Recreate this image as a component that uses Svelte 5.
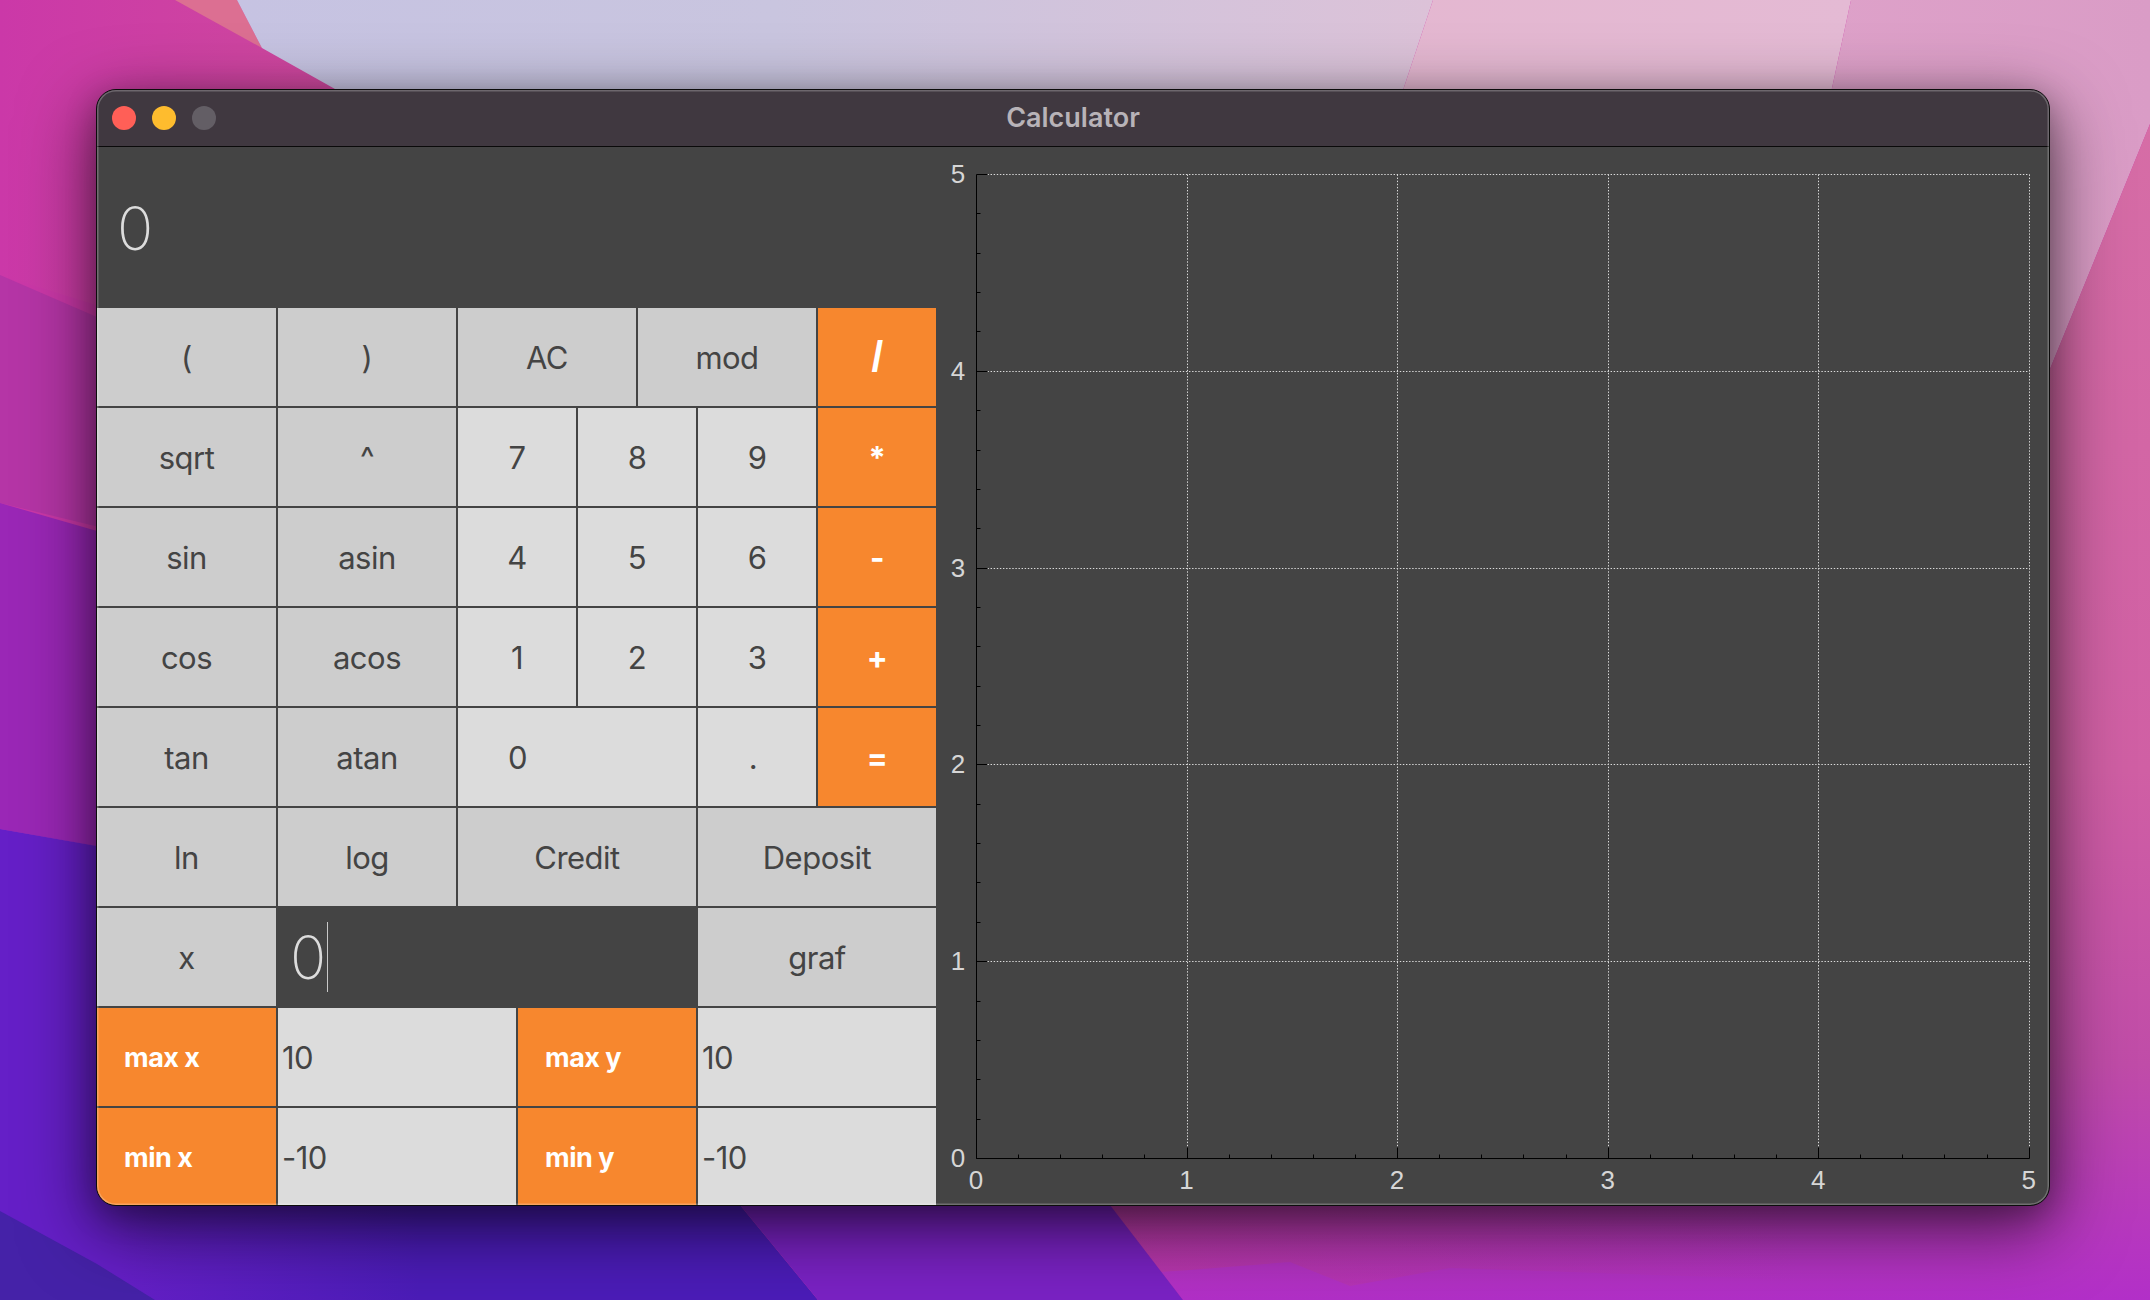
<script>
	// one row = 14 column units, so the 3/2/4 splits all line up
	const keys = [
		{ t: '(', s: 3 }, { t: ')', s: 3 }, { t: 'AC', s: 3 }, { t: 'mod', s: 3 }, { t: '/', s: 2, k: 'op slash' },
		{ t: 'sqrt', s: 3 }, { t: '^', s: 3 }, { t: '7', s: 2, k: 'num' }, { t: '8', s: 2, k: 'num' }, { t: '9', s: 2, k: 'num' }, { t: '*', s: 2, k: 'op' },
		{ t: 'sin', s: 3 }, { t: 'asin', s: 3 }, { t: '4', s: 2, k: 'num' }, { t: '5', s: 2, k: 'num' }, { t: '6', s: 2, k: 'num' }, { t: '-', s: 2, k: 'op' },
		{ t: 'cos', s: 3 }, { t: 'acos', s: 3 }, { t: '1', s: 2, k: 'num' }, { t: '2', s: 2, k: 'num' }, { t: '3', s: 2, k: 'num' }, { t: '+', s: 2, k: 'op' },
		{ t: 'tan', s: 3 }, { t: 'atan', s: 3 }, { t: '0', s: 4, k: 'num zero' }, { t: '.', s: 2, k: 'num dot' }, { t: '=', s: 2, k: 'op' },
		{ t: 'ln', s: 3 }, { t: 'log', s: 3 }, { t: 'Credit', s: 4 }, { t: 'Deposit', s: 4 }
	];

	const ranges = [
		{ label: 'max x', value: '10' }, { label: 'max y', value: '10' },
		{ label: 'min x', value: '-10' }, { label: 'min y', value: '-10' }
	];

	// chart geometry, in the svg's own pixels
	const left = 40, right = 1092.7, top = 27, bottom = 1011;
	const stepX = (right - left) / 5;
	const stepY = (bottom - top) / 5;
	const px = (v) => Math.round(v) + 0.5;
	const units = [0, 1, 2, 3, 4, 5];
	const minor = Array.from({ length: 26 }, (_, i) => i).filter((i) => i % 5 !== 0);
</script>

<div class="desktop">
	<svg class="wallpaper" viewBox="0 0 2150 1300" aria-hidden="true">
		<defs>
			<linearGradient id="lav" x1="0" y1="0" x2="1" y2="0">
				<stop offset="0" stop-color="#c6c3e2" />
				<stop offset="0.45" stop-color="#c9c5df" />
				<stop offset="1" stop-color="#dcc2d8" />
			</linearGradient>
			<linearGradient id="blush" x1="0" y1="0" x2="1" y2="0">
				<stop offset="0" stop-color="#e4b6cf" />
				<stop offset="1" stop-color="#e4bad4" />
			</linearGradient>
			<linearGradient id="rose" x1="0" y1="0" x2="1" y2="0">
				<stop offset="0" stop-color="#dfa3ca" />
				<stop offset="1" stop-color="#da9cc6" />
			</linearGradient>
			<linearGradient id="pink" x1="0" y1="0" x2="0" y2="1">
				<stop offset="0" stop-color="#d66da6" />
				<stop offset="0.55" stop-color="#d05fa4" />
				<stop offset="0.8" stop-color="#c04ca8" />
				<stop offset="1" stop-color="#b22fc8" />
			</linearGradient>
			<linearGradient id="band1" x1="0" y1="0" x2="1" y2="0">
				<stop offset="0" stop-color="#cb38a8" />
				<stop offset="1" stop-color="#d04c9c" />
			</linearGradient>
			<linearGradient id="indigo" gradientUnits="userSpaceOnUse" x1="120" y1="0" x2="420" y2="0">
				<stop offset="0" stop-color="#651fc7" />
				<stop offset="1" stop-color="#4b1cb8" />
			</linearGradient>
			<linearGradient id="wave" gradientUnits="userSpaceOnUse" x1="1110" y1="0" x2="1800" y2="0">
				<stop offset="0" stop-color="#c03c90" stop-opacity="0.45" />
				<stop offset="1" stop-color="#c03c90" stop-opacity="0" />
			</linearGradient>
		</defs>
		<rect width="2150" height="1300" fill="#cb38a8" />
		<polygon points="0,0 400,0 400,400 0,275" fill="url(#band1)" />
		<polygon points="175,0 237,0 262,48" fill="#dc6f92" />
		<polygon points="237,0 1433,0 1200,700 500,300 335,89 262,48" fill="url(#lav)" />
		<polygon points="1433,0 1851,0 1700,700 1200,700" fill="url(#blush)" />
		<polygon points="1851,0 2150,0 2150,124 2050,369 1700,700" fill="url(#rose)" />
		<polygon points="2150,124 2050,369 1110,1000 1110,1205 1183,1300 2150,1300" fill="url(#pink)" />
		<polygon points="1110,1205 1800,1205 1800,1280 1450,1268 1350,1286 1290,1262 1190,1270 1160,1272" fill="url(#wave)" />
		<polygon points="0,275 97,317 400,400 400,600 0,503" fill="#b535a6" />
		<polygon points="0,503 97,531 400,600 400,900 0,829" fill="#9a27b6" />
		<polygon points="0,829 97,846 700,900 740,1205 818,1300 0,1300" fill="url(#indigo)" />
		<polygon points="740,1205 1110,1205 1183,1300 818,1300" fill="#7a22c4" />
		<polygon points="0,1211 97,1264 155,1300 0,1300" fill="#4522a8" />
	</svg>

	<div class="window">
		<header class="titlebar">
			<span class="light red"></span>
			<span class="light yellow"></span>
			<span class="light off"></span>
			<span class="title">Calculator</span>
		</header>

		<div class="body">
			<section class="calc">
				<div class="display">0</div>
				<div class="keys">
					{#each keys as key}
						<button class="key {key.k ?? ''}" style="grid-column: span {key.s}">{key.t}</button>
					{/each}

					<button class="key" style="grid-column: span 3">x</button>
					<div class="x-field"><span>0</span><i class="caret"></i></div>
					<button class="key" style="grid-column: span 4">graf</button>

					{#each ranges as r}
						<div class="range-label">{r.label}</div>
						<div class="range-value">{r.value}</div>
					{/each}
				</div>
			</section>

			<svg class="chart" width="1113" height="1058" viewBox="0 0 1113 1058">
				{#each units as i}
					{#if i < 5}
						<line class="grid" x1={px(left + 11)} x2={px(right)} y1={px(top + i * stepY)} y2={px(top + i * stepY)} />
					{/if}
					{#if i > 0}
						<line class="grid" y1={px(top)} y2={px(bottom - 11)} x1={px(left + i * stepX)} x2={px(left + i * stepX)} />
					{/if}
					<line class="tick" x1={px(left)} x2={px(left) + 11} y1={px(bottom - i * stepY)} y2={px(bottom - i * stepY)} />
					<line class="tick" y1={px(bottom)} y2={px(bottom) - 11} x1={px(left + i * stepX)} x2={px(left + i * stepX)} />
					<text class="label" x={left - 18} y={bottom - i * stepY + 9} text-anchor="middle">{i}</text>
					<text class="label" x={left + i * stepX} y={bottom + 31} text-anchor="middle">{i}</text>
				{/each}
				{#each minor as i}
					<line class="tick" x1={px(left)} x2={px(left) + 4} y1={px(bottom - (i * stepY) / 5)} y2={px(bottom - (i * stepY) / 5)} />
					<line class="tick" y1={px(bottom)} y2={px(bottom) - 4} x1={px(left + (i * stepX) / 5)} x2={px(left + (i * stepX) / 5)} />
				{/each}
				<line class="tick" x1={px(left)} x2={px(left)} y1={px(top)} y2={px(bottom)} />
				<line class="tick" x1={px(left)} x2={px(right)} y1={px(bottom)} y2={px(bottom)} />
			</svg>
		</div>
	</div>
</div>

<style>
	.desktop {
		position: relative;
		box-sizing: border-box;
		width: 2150px;
		height: 1300px;
		padding: 89px 0 0 96px;
		overflow: hidden;
		background: #7a2bb0;
	}

	.wallpaper {
		position: absolute;
		inset: 0;
		width: 2150px;
		height: 1300px;
	}

	.window {
		position: relative;
		box-sizing: border-box;
		width: 1954px;
		height: 1117px;
		display: flex;
		flex-direction: column;
		border: 1px solid #0c0c0c;
		border-radius: 20px;
		overflow: hidden;
		background: #444444;
		box-shadow:
			0 22px 70px 4px rgba(0, 0, 0, 0.56),
			0 8px 30px rgba(0, 0, 0, 0.25);
		font-family: Inter, 'Liberation Sans', sans-serif;
	}

	/* light rim just inside the frame */
	.window::after {
		content: '';
		position: absolute;
		inset: 0;
		border-radius: 19px;
		box-shadow: inset 0 0 0 1.5px rgba(255, 255, 255, 0.24);
		pointer-events: none;
	}

	.titlebar {
		position: relative;
		flex: none;
		height: 57px;
		display: flex;
		align-items: center;
		gap: 16px;
		padding-left: 15px;
		box-sizing: border-box;
		background: #403840;
		border-bottom: 1.5px solid #0a0a0a;
	}

	.light {
		width: 24px;
		height: 24px;
		border-radius: 50%;
	}

	.red { background: #ff5f57; }
	.yellow { background: #febc2e; }
	.off { background: #635e65; }

	.title {
		position: absolute;
		left: 0;
		right: 0;
		transform: translateY(-1px);
		text-align: center;
		font-size: 27px;
		font-weight: 600;
		color: #b8b3b8;
	}

	.body {
		flex: 1;
		display: flex;
		min-height: 0;
	}

	.calc {
		flex: none;
		width: 839px;
		display: flex;
		flex-direction: column;
	}

	.display {
		flex: none;
		height: 161px;
		display: flex;
		align-items: center;
		padding-left: 20px;
		font-size: 60px;
		font-weight: 150;
		color: #dcdcdc;
	}

	.keys {
		display: grid;
		grid-template-columns: 59px repeat(13, 58px);
		grid-auto-rows: 98px;
		gap: 2px;
	}

	.key {
		border: none;
		border-radius: 0;
		padding: 0;
		background: #cdcdcd;
		color: #444444;
		font-family: inherit;
		font-size: 31px;
		font-weight: 400;
		letter-spacing: -0.5px;
	}

	.key.num {
		background: #dcdcdc;
	}

	.key.zero {
		padding-right: 50%;
	}

	.key.dot {
		padding-right: 8px;
	}

	.key.op {
		background: #f7872e;
		color: #ffffff;
		font-weight: 700;
	}

	.key.slash {
		font-family: 'Liberation Sans', sans-serif;
		font-size: 42px;
	}

	.x-field {
		grid-column: span 7;
		margin: -2px 0;
		display: flex;
		align-items: center;
		padding-left: 12px;
		background: #444444;
		color: #dcdcdc;
		font-size: 60px;
		font-weight: 150;
	}

	.caret {
		width: 1px;
		height: 70px;
		margin-left: 1px;
		background: #c8c8c8;
	}

	.range-label,
	.range-value {
		display: flex;
		align-items: center;
	}

	.range-label {
		grid-column: span 3;
		padding-left: 27px;
		background: #f7872e;
		color: #ffffff;
		font-size: 27px;
		font-weight: 700;
		letter-spacing: -0.5px;
	}

	.range-value {
		grid-column: span 4;
		padding-left: 4px;
		background: #dcdcdc;
		color: #444444;
		font-size: 31px;
		letter-spacing: -0.5px;
	}

	.chart {
		flex: none;
		display: block;
	}

	.chart .tick {
		stroke: #000000;
		stroke-width: 1;
	}

	.chart .grid {
		stroke: #dcdcdc;
		stroke-width: 1;
		stroke-dasharray: 1.4 1.7;
	}

	.chart .label {
		fill: #d6d6d6;
		font-family: 'Liberation Sans', sans-serif;
		font-size: 26px;
	}
</style>
